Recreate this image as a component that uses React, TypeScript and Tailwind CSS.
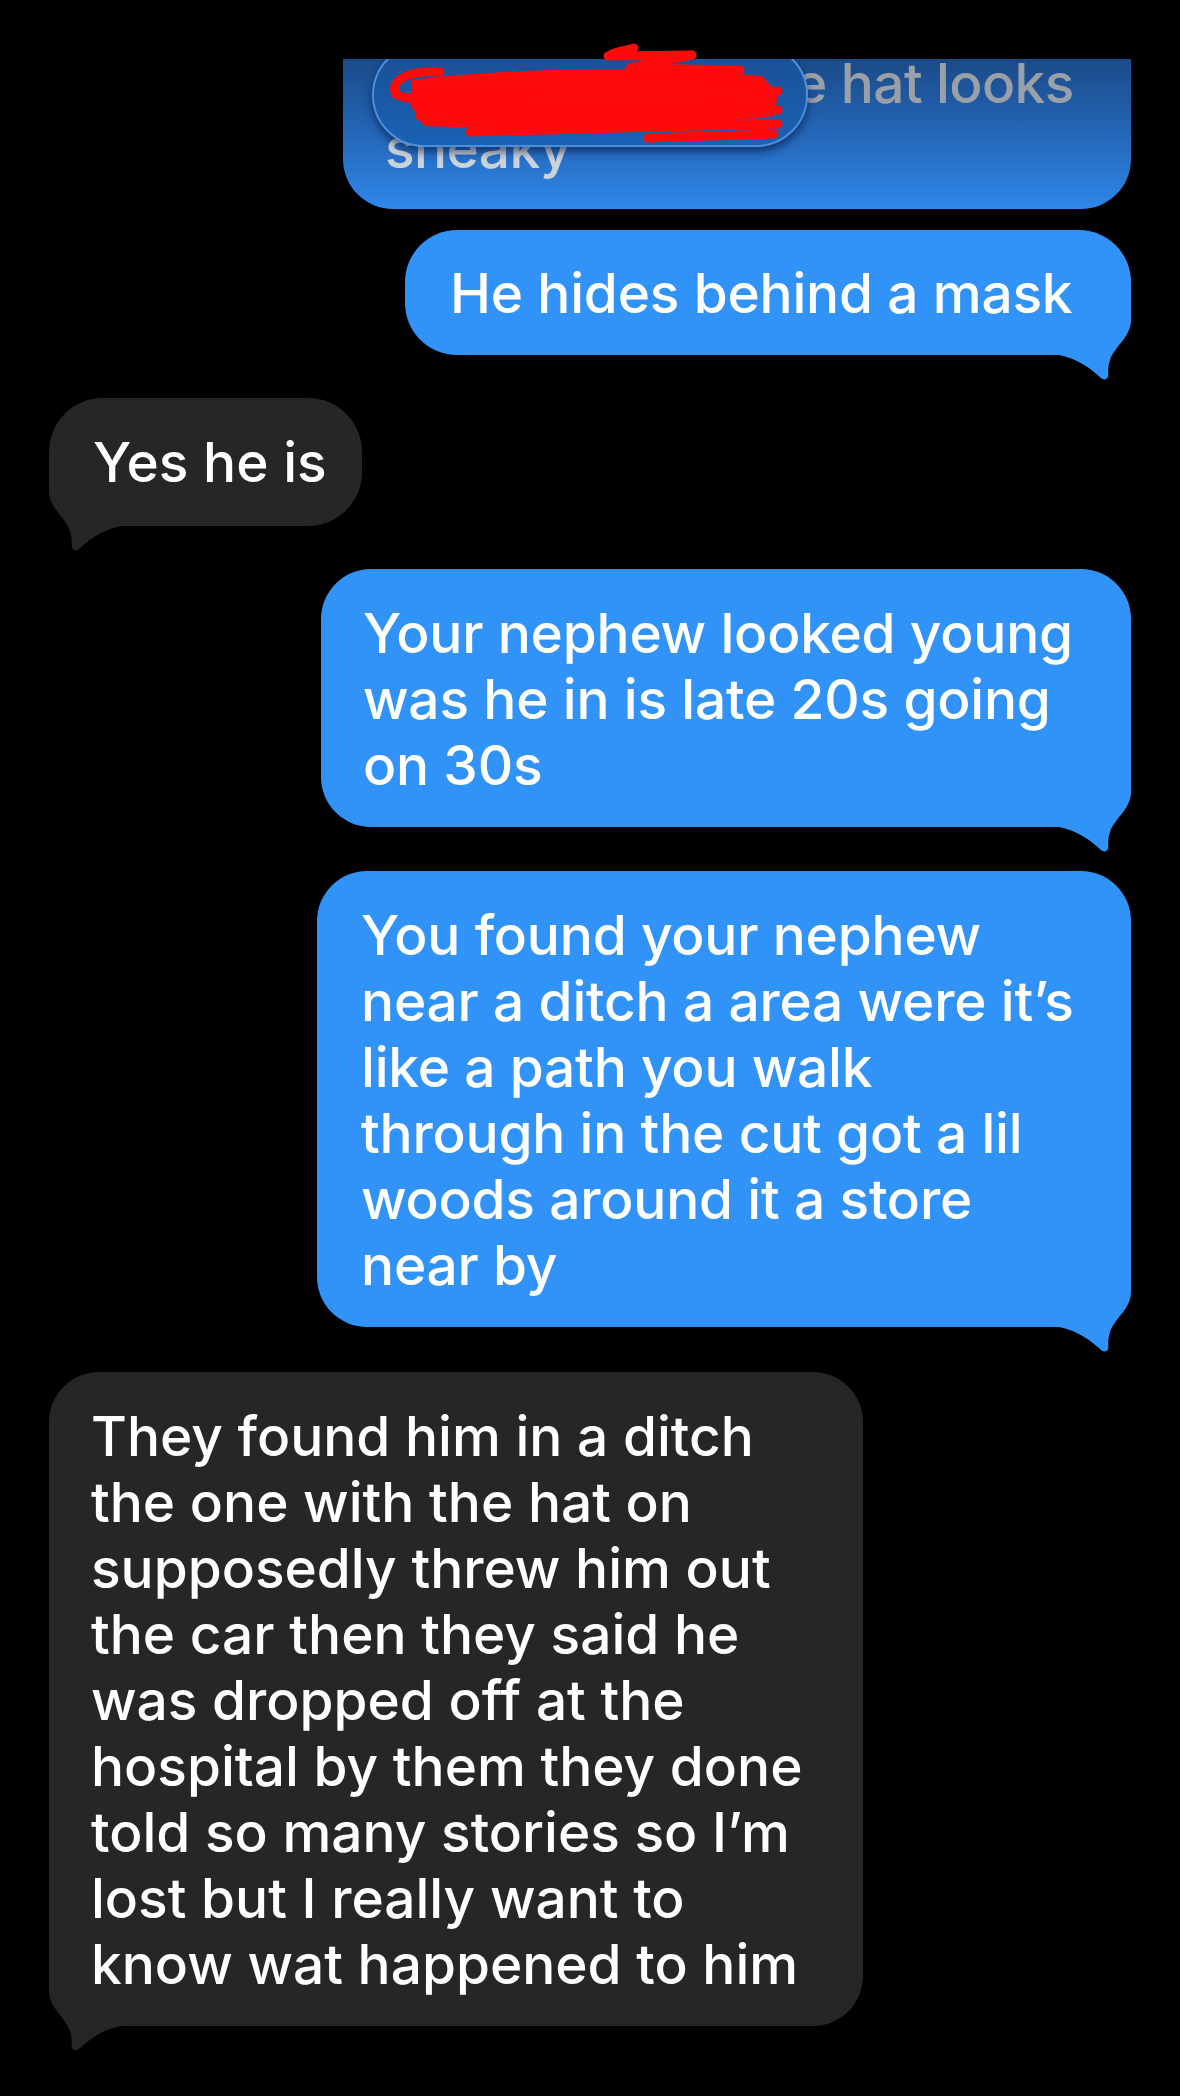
import React from "react";

function RightTail({ fillClass }: { fillClass: string }) {
  return (
    <svg className="absolute right-0 bottom-[-30px] w-[80px] h-[100px]" viewBox="0 0 80 100">
      <path
        className={fillClass}
        d="M0 0 L80 0 L80 35 C80 52 63 62 59 75 C56 84 58 89 57 92 C56 95 52 95 50 93 C40 84 28 74 8 70 L0 70 Z"
      />
    </svg>
  );
}

function LeftTail({ fillClass }: { fillClass: string }) {
  return (
    <svg className="absolute left-0 bottom-[-30px] w-[80px] h-[100px] -scale-x-100" viewBox="0 0 80 100">
      <path
        className={fillClass}
        d="M0 0 L80 0 L80 35 C80 52 63 62 59 75 C56 84 58 89 57 92 C56 95 52 95 50 93 C40 84 28 74 8 70 L0 70 Z"
      />
    </svg>
  );
}

function Lines({ lines, className }: { lines: string[]; className?: string }) {
  return (
    <div className={"relative " + (className ?? "")}>
      {lines.map((l, i) => (
        <div key={i} className="whitespace-nowrap">
          {l}
        </div>
      ))}
    </div>
  );
}

export default function App() {
  return (
    <div className="relative w-[1180px] h-[2096px] bg-black overflow-hidden font-['Inter','Noto_Sans',sans-serif] font-medium text-[55px] leading-[66px] text-white">
      <div className="flex flex-col px-[49px] pt-[59px]">
        {/* Top, partially scrolled bubble */}
        <div className="relative self-end w-[788px] h-[150px] rounded-b-[50px] bg-gradient-to-b from-[#1b4a88] via-[#2467b8] to-[#2f88ea] overflow-hidden">
          <div className="pl-[42px] pt-[2px] tracking-[-0.6px]">
            <div className="whitespace-nowrap pl-[410px] leading-[44px] text-[#9aa0a8]">e hat looks</div>
            <div className="whitespace-nowrap leading-[86px] text-[#ccd2da]">sneaky</div>
          </div>
          <div className="absolute left-[29px] top-[-16px] w-[436px] h-[104px] rounded-full border-2 border-[#4b8fdb] bg-gradient-to-b from-[#1a4e92] to-[#1a62b6] shadow-[0_5px_9px_rgba(5,20,60,0.6)]">
            <div className="absolute left-[385px] top-[30px] text-[44px] leading-[44px] text-[#8fa3bd]">›</div>
          </div>
        </div>

        {/* He hides behind a mask */}
        <div className="relative self-end mt-[21px] w-[726px] h-[125px] rounded-[52px] bg-[#3193f8] pl-[45px] pt-[30px]">
          <RightTail fillClass="fill-[#3193f8]" />
          <Lines className="tracking-[-0.2px]" lines={["He hides behind a mask"]} />
        </div>

        {/* Yes he is */}
        <div className="relative self-start mt-[43px] w-[313px] h-[128px] rounded-[54px] bg-[#262629] pl-[44px] pt-[31px]">
          <LeftTail fillClass="fill-[#262629]" />
          <Lines lines={["Yes he is"]} />
        </div>

        {/* Your nephew looked young */}
        <div className="relative self-end mt-[43px] w-[810px] h-[258px] rounded-[50px] bg-[#3193f8] pl-[42px] pt-[31px]">
          <RightTail fillClass="fill-[#3193f8]" />
          <Lines
            className="tracking-[-0.2px]"
            lines={["Your nephew looked young", "was he in is late 20s going", "on 30s"]}
          />
        </div>

        {/* You found your nephew */}
        <div className="relative self-end mt-[44px] w-[814px] h-[456px] rounded-[50px] bg-[#3193f8] pl-[44px] pt-[31px]">
          <RightTail fillClass="fill-[#3193f8]" />
          <Lines
            className="tracking-[-0.2px]"
            lines={[
              "You found your nephew",
              "near a ditch a area were it\u2019s",
              "like a path you walk",
              "through in the cut got a lil",
              "woods around it a store",
              "near by",
            ]}
          />
        </div>

        {/* They found him */}
        <div className="relative self-start mt-[45px] w-[814px] h-[654px] rounded-[50px] bg-[#262629] pl-[42px] pt-[31px]">
          <LeftTail fillClass="fill-[#262629]" />
          <Lines
            lines={[
              "They found him in a ditch",
              "the one with the hat on",
              "supposedly threw him out",
              "the car then they said he",
              "was dropped off at the",
              "hospital by them they done",
              "told so many stories so I\u2019m",
              "lost but I really want to",
              "know wat happened to him",
            ]}
          />
        </div>
      </div>

      {/* Red scribble redaction */}
      <svg className="absolute left-0 top-0 w-[1180px] h-[200px] pointer-events-none" viewBox="0 0 1180 200">
        <path
          className="fill-[#ff0a0a]"
          d="M412 80 C 500 68, 650 66, 762 76 L 778 94 L 774 116 C 700 128, 560 132, 424 126 L 410 104 Z"
        />
        <g className="stroke-[#ff0a0a]" fill="none" strokeWidth="9" strokeLinecap="round" strokeLinejoin="round">
          <path d="M440 72 C 402 70, 390 84, 396 94 C 402 102, 470 100, 530 94" />
          <path d="M608 56 L 692 55 L 630 68 L 740 70" />
          <path d="M612 54 C 620 51, 628 50, 634 48" />
          <path d="M700 92 L 778 91" />
          <path d="M470 132 L 778 124" />
          <path d="M648 138 L 774 134" />
          <path d="M420 116 L 778 110" />
        </g>
      </svg>
    </div>
  );
}
